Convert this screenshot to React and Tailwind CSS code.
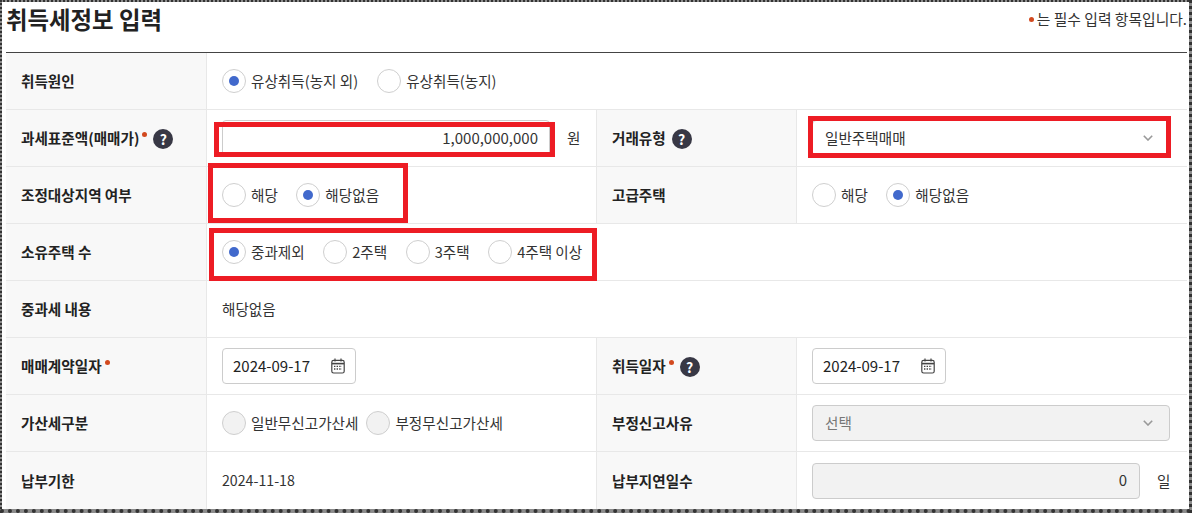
import React from "react";

function Label({ children, required, help }) {
    return (
        <div className="flex items-center bg-[#f8f8f8] pl-[15px] text-[14.6px] font-bold text-[#222] border-r border-[#e8e8e8] h-full">
            <span>{children}</span>
            {required && <span className="ml-[3px] mb-[8px] w-[5px] h-[5px] rounded-full bg-[#d2491f]" />}
            {help && <Help />}
        </div>
    );
}

function Help() {
    return (
        <span className="ml-[6px] mt-[2px] w-[20px] h-[20px] rounded-full bg-[#383845] text-white text-[14px] font-bold flex items-center justify-center leading-none">
            ?
        </span>
    );
}

function Radio({ label, checked, disabled, gap = "mr-[18.5px]" }) {
    return (
        <label className={`flex items-center ${gap}`}>
            <span className={`w-[24px] h-[24px] rounded-full border border-[#cfcfcf] flex items-center justify-center ${disabled ? "bg-[#f2f2f2]" : "bg-white"}`}>
                {checked && <span className="w-[10px] h-[10px] rounded-full bg-[#4169cc]" />}
            </span>
            <span className="ml-[5px] text-[14.6px] text-[#333]">{label}</span>
        </label>
    );
}

function Cell({ children, className = "" }) {
    return <div className={`flex items-center pl-[15px] h-full ${className}`}>{children}</div>;
}

function Chevron() {
    return (
        <svg width="10" height="6" viewBox="0 0 10 6" fill="none" stroke="#999" strokeWidth="1.6">
            <path d="M0.8 0.8 L5 5 L9.2 0.8" />
        </svg>
    );
}

function CalendarIcon() {
    return (
        <svg width="14" height="16" viewBox="0 0 14 16" fill="none" stroke="#444" strokeWidth="1.2">
            <rect x="0.8" y="2.4" width="12.4" height="12.6" rx="1.8" />
            <path d="M1 5.6 H13" strokeWidth="1.6" />
            <path d="M4 0.4 V3.4 M10 0.4 V3.4" />
            <path d="M3 8.4 H11 M3 11 H11" strokeWidth="1.4" strokeDasharray="1.4 1.2" />
        </svg>
    );
}

function DateBox() {
    return (
        <div className="w-[134px] h-[36px] rounded-[4px] border border-[#ccc] bg-white flex items-center justify-between pl-[10px] pr-[10px] text-[15px] text-[#222]">
            <span>2024-09-17</span>
            <CalendarIcon />
        </div>
    );
}

function Row({ children }) {
    return (
        <div className="grid grid-cols-[201px_390px_200px_1fr] h-[57px] border-b border-[#e8e8e8] last:border-b-0">
            {children}
        </div>
    );
}

export default function App() {
    return (
        <div
            className="relative w-[1192px] h-[513px] bg-[#8c8c8c] border-t-[2px] border-l-[2px] border-r-[3px] border-b-[4px] border-dotted border-[#333] overflow-hidden"
            style={{ fontFamily: '"Noto Sans CJK KR", "Noto Sans", sans-serif' }}
        >
            <div className="h-full bg-white pl-[4px] pr-[2px]">
                <div className="flex justify-between h-[50px]">
                    <h2 className="text-[23.4px] font-bold text-[#222] leading-[34px]">취득세정보 입력</h2>
                    <p className="text-[14.8px] text-[#333] flex items-center h-[34px]">
                        <span className="w-[5px] h-[5px] rounded-full bg-[#d2491f] mr-[3px]" />는 필수 입력 항목입니다.
                    </p>
                </div>
                <div className="border-t border-[#444]">
                    <Row>
                        <Label>취득원인</Label>
                        <Cell className="col-span-3">
                            <Radio label="유상취득(농지 외)" checked gap="mr-[19px]" />
                            <Radio label="유상취득(농지)" />
                        </Cell>
                    </Row>
                    <Row>
                        <Label required help>과세표준액(매매가)</Label>
                        <Cell className="border-r border-[#e8e8e8]">
                            <div className="w-[328px] h-[36px] rounded-[4px] border border-[#ccc] flex items-center justify-end pr-[11px] text-[15px] text-[#333]">1,000,000,000</div>
                            <span className="ml-[17px] text-[14.6px] text-[#333]">원</span>
                        </Cell>
                        <Label help>거래유형</Label>
                        <Cell>
                            <div className="w-[358px] h-[36px] rounded-[4px] border border-[#ccc] flex items-center justify-between pl-[12px] pr-[16px] text-[14.6px] text-[#333]">
                                <span>일반주택매매</span>
                                <Chevron />
                            </div>
                        </Cell>
                    </Row>
                    <Row>
                        <Label>조정대상지역 여부</Label>
                        <Cell className="border-r border-[#e8e8e8]">
                            <Radio label="해당" />
                            <Radio label="해당없음" checked />
                        </Cell>
                        <Label>고급주택</Label>
                        <Cell>
                            <Radio label="해당" />
                            <Radio label="해당없음" checked />
                        </Cell>
                    </Row>
                    <Row>
                        <Label>소유주택 수</Label>
                        <Cell className="col-span-3">
                            <Radio label="중과제외" checked />
                            <Radio label="2주택" />
                            <Radio label="3주택" />
                            <Radio label="4주택 이상" />
                        </Cell>
                    </Row>
                    <Row>
                        <Label>중과세 내용</Label>
                        <Cell className="col-span-3 text-[14.6px] text-[#333]">해당없음</Cell>
                    </Row>
                    <Row>
                        <Label required>매매계약일자</Label>
                        <Cell className="border-r border-[#e8e8e8]"><DateBox /></Cell>
                        <Label required help>취득일자</Label>
                        <Cell><DateBox /></Cell>
                    </Row>
                    <Row>
                        <Label>가산세구분</Label>
                        <Cell className="border-r border-[#e8e8e8]">
                            <Radio label="일반무신고가산세" disabled gap="mr-[8px]" />
                            <Radio label="부정무신고가산세" disabled />
                        </Cell>
                        <Label>부정신고사유</Label>
                        <Cell>
                            <div className="w-[358px] h-[36px] rounded-[4px] border border-[#ccc] bg-[#f2f2f2] flex items-center justify-between pl-[12px] pr-[16px] text-[14.6px] text-[#777]">
                                <span>선택</span>
                                <Chevron />
                            </div>
                        </Cell>
                    </Row>
                    <Row>
                        <Label>납부기한</Label>
                        <Cell className="border-r border-[#e8e8e8] text-[14.2px] text-[#333]">2024-11-18</Cell>
                        <Label>납부지연일수</Label>
                        <Cell>
                            <div className="w-[328px] h-[36px] rounded-[4px] border border-[#ccc] bg-[#f2f2f2] flex items-center justify-end pr-[12px] text-[15px] text-[#333]">0</div>
                            <span className="ml-[17px] text-[14.6px] text-[#333]">일</span>
                        </Cell>
                    </Row>
                </div>
            </div>
            {/* red annotation boxes drawn over the form */}
            <div className="absolute left-[212px] top-[120px] w-[341px] h-[35px] border-[5px] border-[#ed1c24]" />
            <div className="absolute left-[806px] top-[114px] w-[363px] h-[42px] border-[5px] border-[#ed1c24]" />
            <div className="absolute left-[206px] top-[161px] w-[200px] h-[60px] border-[5px] border-[#ed1c24]" />
            <div className="absolute left-[207px] top-[226px] w-[388px] h-[53px] border-[5px] border-[#ed1c24]" />
        </div>
    );
}
